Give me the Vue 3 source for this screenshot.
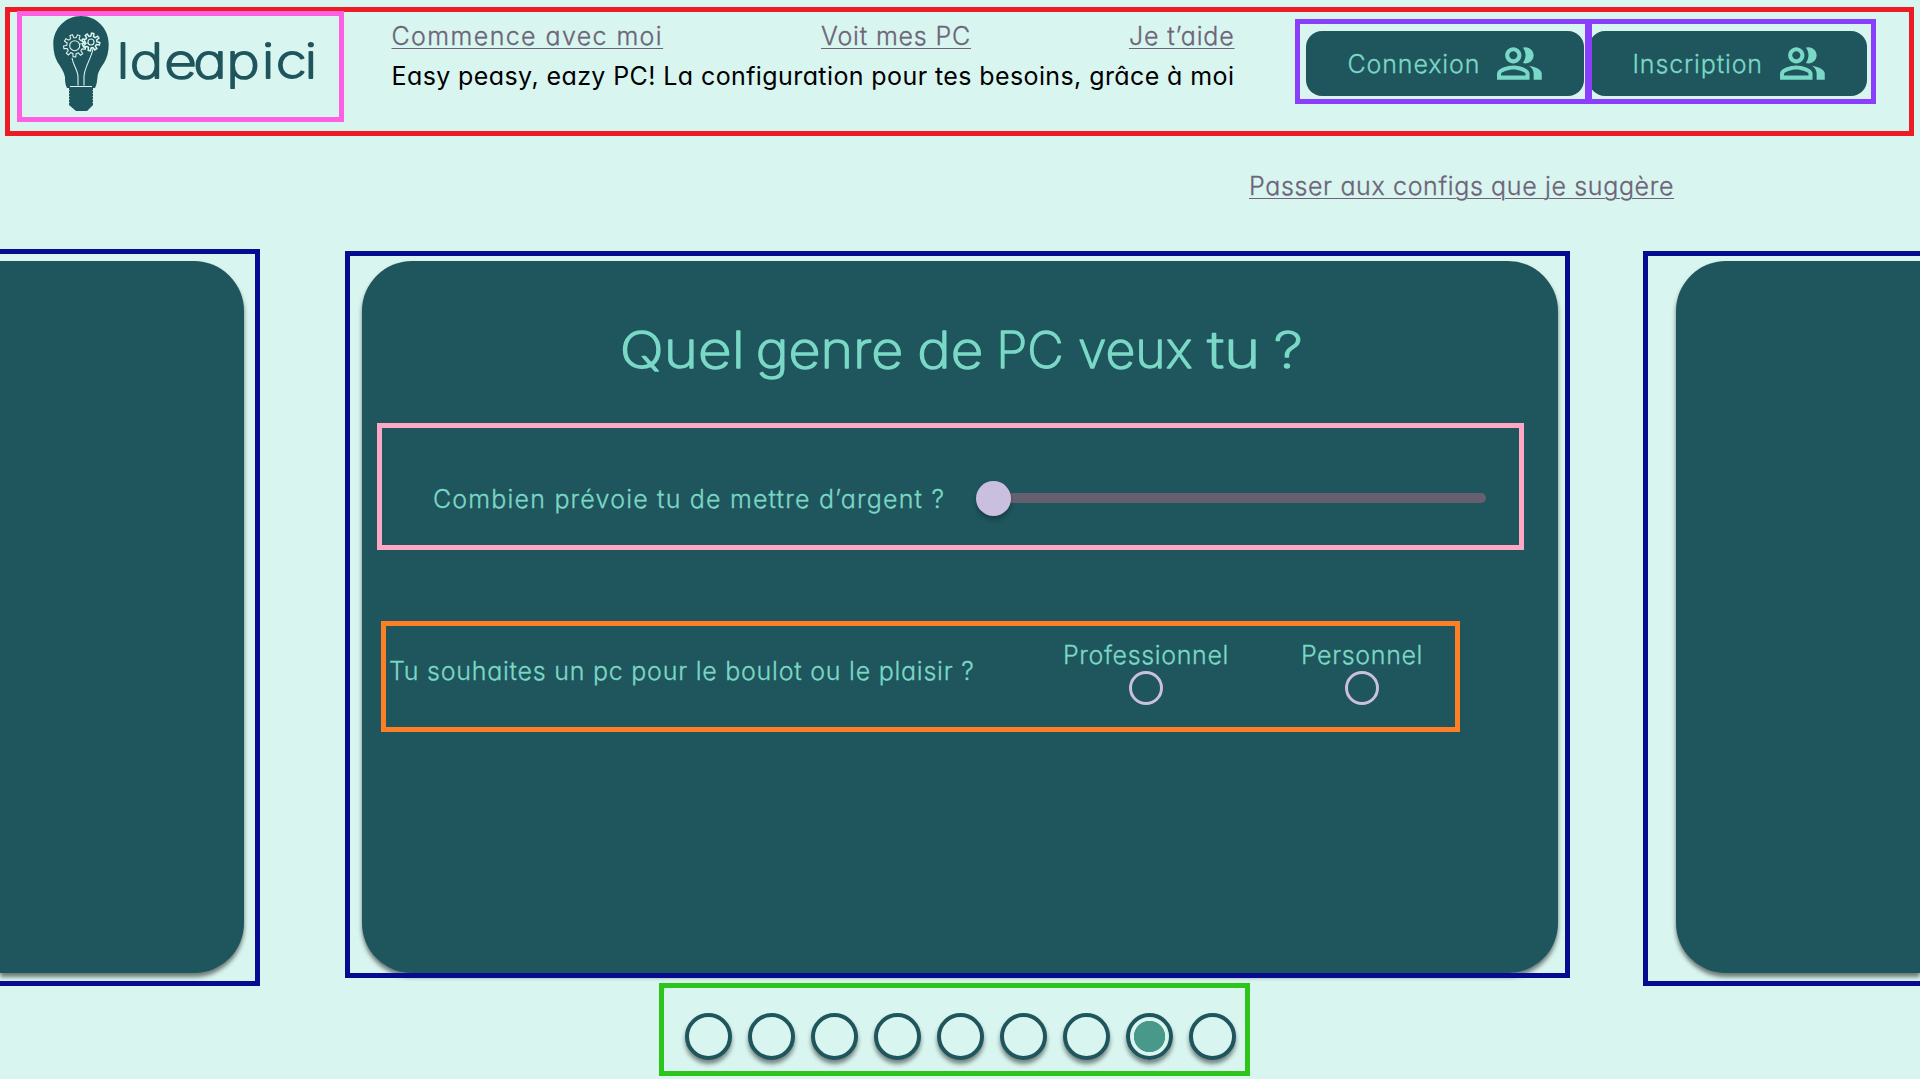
<script setup>
const steps = 9
const current = 7
const accounts = ['Connexion', 'Inscription']

const titleWords = [
  { text: 'Quel', x: 7.8, width: 125 },
  { text: 'genre', x: 143.7, width: 147.5 },
  { text: 'de', x: 305.3, width: 66 },
  { text: 'PC', x: 384.3, width: 67.5 },
  { text: 'veux', x: 466, width: 114.5 },
  { text: 'tu', x: 595.3, width: 53 },
  { text: '?', x: 661.8, width: 29 },
]

// Outline of a cog wheel, centred on (cx, cy)
function gear(cx, cy, outer, inner, teeth) {
  const points = []
  const step = (Math.PI * 2) / teeth
  for (let i = 0; i < teeth; i++) {
    const a = i * step + 0.2
    for (const [r, o] of [[inner, -0.3], [outer, -0.17], [outer, 0.17], [inner, 0.3]]) {
      points.push(`${(cx + r * Math.cos(a + o * step)).toFixed(2)} ${(cy + r * Math.sin(a + o * step)).toFixed(2)}`)
    }
  }
  return `M${points.join('L')}Z`
}
const bigGear = gear(21.7, 29.7, 11.2, 8, 9)
const smallGear = gear(38, 26, 8.8, 6, 8)
</script>

<template>
  <div class="page">
    <header class="header">
      <div class="logo">
        <svg class="bulb" viewBox="0 0 56 95" width="56" height="95">
          <path fill="#1f555d" d="M28 0C12.500 0 .3 12.500 .3 28C.3 36 2 42 5 47C9 53 11 56 12 61C12 65 12 68 14 72H16V89L23 95H34L40 89V72H42C44 68 44 65 44.500 61C45 56 47 53 51 47C54 42 55.700 36 55.700 28C55.700 12.500 43.500 0 28 0Z" />
          <g fill="none" stroke="#d9f5ef" stroke-width="1.100">
            <path :d="bigGear" />
            <circle cx="21.700" cy="29.700" r="5" />
            <path :d="smallGear" stroke-width="1.500" />
            <circle cx="38" cy="26" r="3" />
            <path d="M19 42C20 49 25 54 25 61V69.500M40 33C38 43 31 52 31 61V69.500M17 70.500H39M27 28L35 27" />
          </g>
          <path stroke="#d9f5ef" stroke-width="1" stroke-dasharray="1 2" d="M16 74V89M40 74V89" />
        </svg>
        <svg class="wordmark" width="204" height="70" viewBox="0 0 204 70">
          <text transform="scale(1.18 1)" x="-2.800 9.100 38.300 62.900 91 120.900 132.800 157.300" y="51">Ideapici</text>
        </svg>
      </div>
      <div class="intro">
        <nav class="nav">
          <a class="start">Commence avec moi</a>
          <a>Voit mes PC</a>
          <a>Je t’aide</a>
        </nav>
        <p class="tagline">Easy peasy, eazy PC! La configuration pour tes besoins, grâce à moi</p>
      </div>
      <div class="accounts">
        <div v-for="label in accounts" :key="label" class="account">
          <button class="button">
            <span>{{ label }}</span>
            <svg width="48.800" height="48.800" viewBox="0 0 24 24" fill="#7ad8c6">
              <path d="M16.670 13.130C18.040 14.060 19 15.320 19 17v3h4v-3c0-2.180-3.570-3.470-6.330-3.870zM15 12c2.210 0 4-1.790 4-4s-1.790-4-4-4c-.47 0-.91.1-1.330.24C14.500 5.270 15 6.580 15 8s-.5 2.730-1.330 3.760c.42.14.86.24 1.330.24zM9 12c2.210 0 4-1.790 4-4s-1.790-4-4-4-4 1.790-4 4 1.790 4 4 4zm0-6c1.100 0 2 .9 2 2s-.9 2-2 2-2-.9-2-2 .9-2 2-2zM9 13c-2.670 0-8 1.340-8 4v3h16v-3c0-2.660-5.330-4-8-4zm6 5H3v-.99C3.200 16.290 6.300 15 9 15s5.800 1.290 6 2v1z" />
            </svg>
          </button>
        </div>
      </div>
    </header>

    <a class="skip">Passer aux configs que je suggère</a>

    <main class="carousel">
      <section class="slide previous"><div class="card"></div></section>
      <section class="slide active">
        <div class="card">
          <svg class="title" width="700" height="80" viewBox="0 0 700 80">
            <text v-for="word in titleWords" :key="word.text" :x="word.x" y="56" :textLength="word.width" lengthAdjust="spacingAndGlyphs">{{ word.text }}</text>
          </svg>
          <div class="budget">
            <span class="question">Combien prévoie tu de mettre d’argent ?</span>
            <div class="slider"><div class="thumb"></div><div class="track"></div></div>
          </div>
          <div class="usage">
            <span class="question">Tu souhaites un pc pour le boulot ou le plaisir ?</span>
            <label class="option pro"><span>Professionnel</span><i class="radio"></i></label>
            <label class="option perso"><span>Personnel</span><i class="radio"></i></label>
          </div>
        </div>
      </section>
      <section class="slide next"><div class="card"></div></section>
    </main>

    <div class="pager">
      <span v-for="n in steps" :key="n" class="dot" :class="{ current: n - 1 === current }"></span>
    </div>
  </div>
</template>

<style>
body { margin: 0; background: #d9f5ef; }
</style>

<style scoped>
.page { display: flex; flex-direction: column; align-items: flex-start; width: 1920px; height: 1079px; overflow: hidden; background: #d9f5ef; color: #7ad8c6; font: 300 25px/38px Inter, "Liberation Sans", sans-serif; font-feature-settings: "cv11"; -webkit-text-stroke: .3px; white-space: nowrap; }
.page * { box-sizing: border-box; }
.header { display: flex; align-items: flex-start; width: 1909px; height: 129px; margin: 7px 0 0 5px; border: 5px solid #ed1c24; }
.logo { display: flex; flex: none; width: 327px; height: 111px; margin: -1px 0 0 7px; border: 5px solid #ff5fe2; }
.bulb { flex: none; margin-left: 31px; }
.wordmark { flex: none; margin: 11px 0 0 10px; overflow: visible; }
.wordmark text { font-size: 48px; font-weight: 200; fill: #1f555d; stroke: #1f555d; stroke-width: 1.800px; stroke-linejoin: round; }
.intro { flex: none; width: 843px; margin: 5px 0 0 47.500px; }
.nav { display: flex; justify-content: space-between; height: 40px; color: #6c6478; letter-spacing: .83px; }
.nav .start { letter-spacing: 1.400px; }
.nav a, .skip { text-decoration: underline; text-decoration-thickness: 1.300px; text-underline-offset: 3px; }
.tagline { margin: 0; color: #000; font-weight: 400; letter-spacing: .4px; -webkit-text-stroke: 0; }
.accounts { display: flex; margin: 7px 0 0 60.500px; }
.account { flex: none; width: 295px; height: 85px; padding: 7px 0 0 6px; overflow: hidden; border: 5px solid #8a3ffc; }
.account + .account { width: 289px; margin-left: -3px; padding-left: 0; }
.button { display: flex; align-items: center; justify-content: flex-end; gap: 15px; width: 278px; height: 65px; padding: 0 40px 0 0; border: 0; border-radius: 16px; background: #1f555d; color: inherit; font: inherit; font-feature-settings: inherit; letter-spacing: .85px; }
.account + .account .button { margin-left: -3.300px; }
.skip { margin: 31px 0 0 1249px; color: #6c6478; letter-spacing: .64px; }
.carousel { display: flex; align-items: flex-start; width: 1920px; height: 737px; margin-top: 44px; }
.slide { position: relative; flex: none; }
.slide::after { content: ""; position: absolute; inset: 0; border: 5px solid #070b8f; }
.previous { width: 260px; height: 737px; padding: 12px 16px 0 0; }
.previous::after { border-left: 0; }
.active { width: 1225px; height: 727px; margin: 2px 0 0 85px; padding: 10px 12px 0 16.700px; }
.next { width: 277px; height: 735px; margin: 2px 0 0 73px; padding: 10px 0 0 33px; }
.next::after { border-right: 0; }
.card { display: flow-root; height: 711.500px; border-radius: 50px; background: #1f555d; box-shadow: 0 4px 4px rgba(0, 0, 0, .5); }
.previous .card { border-radius: 0 50px 50px 0; }
.next .card { border-radius: 50px 0 0 50px; }
.title { display: block; margin: 51px 0 0 250px; }
.title text { font-size: 50px; font-weight: 200; fill: #7ad8c6; stroke: #7ad8c6; stroke-width: 1.500px; stroke-linejoin: round; }
.budget { display: flex; align-items: flex-start; width: 1147px; height: 127px; margin: 31px 0 0 15.300px; padding: 51.600px 33px 0 51px; border: 5px solid #ffa8c5; }
.budget .question { letter-spacing: 1.180px; }
.slider { display: flex; align-items: center; width: 510px; height: 35px; margin: 1px 0 0 auto; }
.thumb { position: relative; z-index: 1; width: 35px; height: 35px; border-radius: 50%; background: #cbbfdf; box-shadow: 0 4px 4px rgba(0, 0, 0, .25); }
.track { flex: 1; height: 10px; margin-left: -10px; border-radius: 5px; background: #665f70; }
.usage { display: flex; align-items: flex-start; width: 1079px; height: 111px; margin: 71px 0 0 19.300px; border: 5px solid #ff7f27; }
.usage .question { width: 586px; margin: 26px 0 0 3px; letter-spacing: .75px; }
.option { display: flex; flex: none; flex-direction: column; align-items: center; margin-top: 10px; letter-spacing: .63px; }
.pro { width: 166px; margin-left: 88px; }
.perso { width: 122px; margin-left: 72px; }
.radio { width: 34px; height: 34px; margin-top: -3px; border: 3px solid #cbbfdf; border-radius: 50%; }
.pager { display: flex; gap: 16px; width: 591px; height: 93px; margin: -3px 0 0 659px; padding: 25px 0 0 21px; border: 5px solid #2dc51c; }
.dot { flex: none; width: 47px; height: 47px; border: 4px solid #1f555d; border-radius: 50%; background: #d9f5ef; box-shadow: 0 4px 4px rgba(0, 0, 0, .45); }
.dot.current { background: radial-gradient(circle, #48998a 15.300px, #d9f5ef 16px); }
</style>
